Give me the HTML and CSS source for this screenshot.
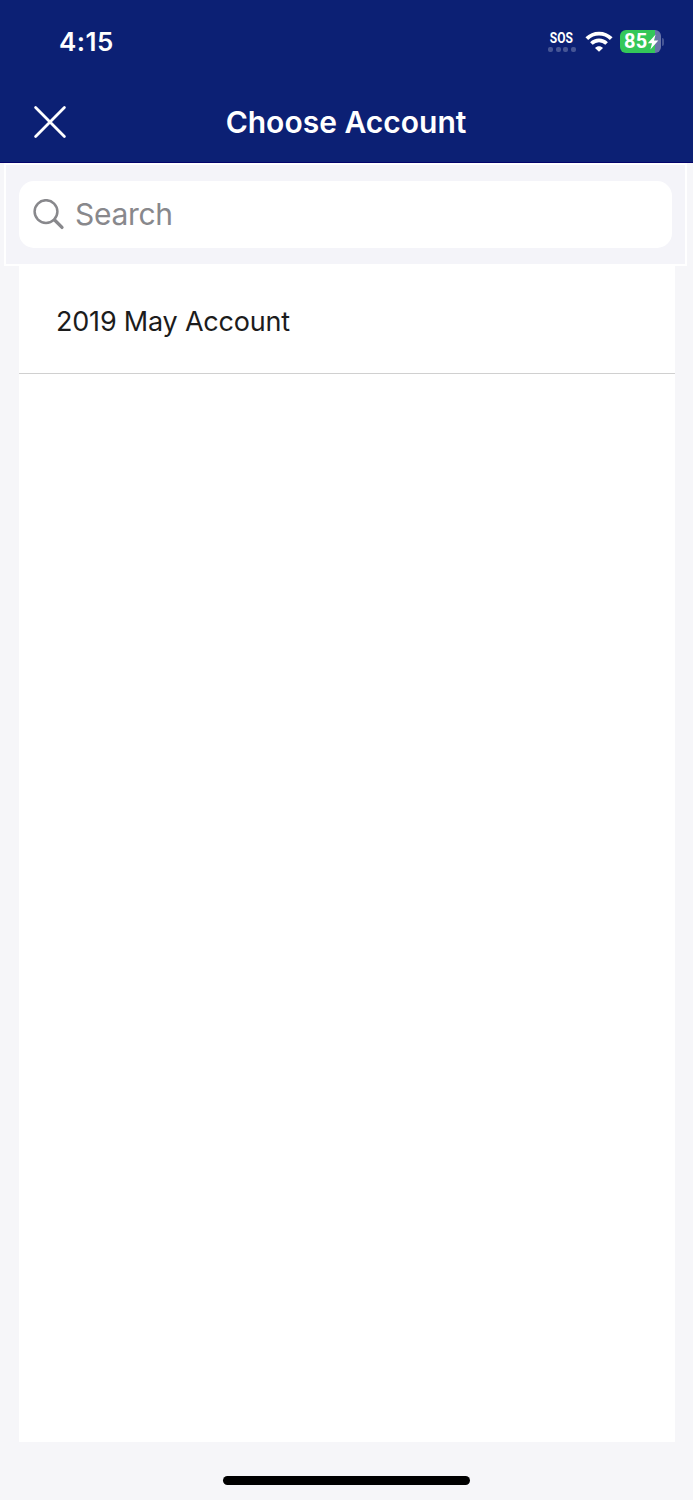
FILE: index.html
```
<!DOCTYPE html>
<html lang="en">
<head>
  <meta charset="UTF-8" />
  <meta name="viewport" content="width=device-width, initial-scale=1.0" />
  <title>Choose Account</title>
  <link rel="stylesheet" href="styles.css">
</head>
<body>
  <div class="screen">
    <header class="header">
      <div class="status-bar">
        <span class="time">4:15</span>
        <div class="status-icons">
          <div class="sos">
            <span class="sos-text">SOS</span>
            <div class="sos-dots"><i></i><i></i><i></i><i></i></div>
          </div>
          <svg class="wifi" width="28" height="22" viewBox="0 0 28 22" fill="none" stroke="#fff">
            <path d="M1.8 7.6C8.6 .9 19.4 .9 26.2 7.6" stroke-width="3.9" />
            <path d="M6.4 12.5C10.7 8.3 17.3 8.3 21.6 12.5" stroke-width="3.7" />
            <path d="M14 20.8L10 16.9C12.3 14.7 15.7 14.7 18 16.9Z" fill="#fff" stroke="none" />
          </svg>
          <div class="battery">
            <div class="battery-body">
              <span>85</span>
              <svg width="12" height="16" viewBox="0 0 12 16" fill="#fff">
                <path d="M8.6 .5L.8 9.2H5L3.4 15.5L11.3 6.6H7Z" />
              </svg>
            </div>
            <div class="battery-tip"></div>
          </div>
        </div>
      </div>
      <div class="nav">
        <button class="close-btn" aria-label="Close">
          <svg width="34" height="34" viewBox="0 0 34 34" fill="none" stroke="#fff" stroke-width="2.8" stroke-linecap="round">
            <path d="M2.6 2.6L31.4 31.4M31.4 2.6L2.6 31.4" />
          </svg>
        </button>
        <h1 class="title">Choose Account</h1>
      </div>
    </header>

    <div class="search-bar">
      <label class="search-box">
        <svg width="32" height="32" viewBox="0 0 32 32" fill="none" stroke="#88888c" stroke-linecap="round">
          <circle cx="13" cy="12.6" r="11.4" stroke-width="2.5" />
          <path d="M21.6 21L29 28.4" stroke-width="3.3" />
        </svg>
        <input type="text" placeholder="Search" />
      </label>
    </div>

    <main class="list">
      <div class="list-item">2019 May Account</div>
    </main>

    <div class="home-indicator"></div>
  </div>
</body>
</html>
```
FILE: styles.css
```
* {
  box-sizing: border-box;
}

body {
  margin: 0;
  font-family: 'Inter', 'Liberation Sans', sans-serif;
  background-color: #f6f6f9;
}

.screen {
  display: flex;
  flex-direction: column;
  height: 1500px;
}

/* header */
.header {
  height: 163px;
  background: #0c2074;
  border-bottom: 1px solid #04046c;
  color: #fff;
}

.status-bar {
  display: flex;
  justify-content: space-between;
  align-items: center;
  height: 83px;
  padding: 0 29px 0 59px;
}

.time {
  font-size: 26px;
  font-weight: 600;
  letter-spacing: 0.5px;
}

.status-icons {
  display: flex;
  align-items: center;
}

.sos {
  width: 28px;
  margin-right: 9px;
  text-align: center;
}

.sos-text {
  display: block;
  font-family: 'Roboto', sans-serif;
  font-size: 15px;
  font-weight: 700;
  line-height: 14px;
  transform: translateX(-1px) scaleX(0.8);
}

.sos-dots {
  display: flex;
  justify-content: space-between;
  margin-top: 2px;
}

.sos-dots i {
  width: 5px;
  height: 5px;
  border-radius: 2px;
  background: #465595;
}

.wifi {
  margin-right: 7px;
}

.battery {
  display: flex;
  align-items: center;
}

.battery-body {
  display: flex;
  align-items: center;
  width: 41px;
  height: 23px;
  padding-left: 4px;
  border-radius: 6px;
  background: linear-gradient(to right, #34c759 85%, #6874a8 85%);
}

.battery-body span {
  font-family: 'Roboto', sans-serif;
  font-size: 20px;
  font-weight: 700;
  line-height: 23px;
  letter-spacing: 0.2px;
}

.battery-tip {
  width: 2px;
  height: 8px;
  margin-left: 1px;
  border-radius: 0 2px 2px 0;
  background: #465595;
}

.nav {
  display: grid;
  grid-template-columns: 67px 1fr 67px;
  align-items: center;
  height: 78px;
}

.close-btn {
  display: flex;
  padding: 0 0 0 33px;
  border: none;
  background: none;
  cursor: pointer;
}

.title {
  margin: 0 1px 0 0;
  font-size: 30px;
  font-weight: 600;
  line-height: 36px;
  text-align: center;
}

/* search */
.search-bar {
  height: 103px;
  margin: 0 6px 0 4px;
  padding: 16px 13px;
  border: 2px solid #fff;
  background: #f4f4f9;
}

.search-box {
  display: flex;
  align-items: center;
  gap: 10px;
  height: 67px;
  padding-left: 14px;
  border-radius: 15px;
  background: #fff;
}

.search-box input {
  flex: 1;
  height: 36px;
  margin-bottom: 2px;
  padding: 0;
  border: none;
  outline: none;
  background: none;
  font-family: inherit;
  font-size: 30px;
  letter-spacing: -0.3px;
}

.search-box input::placeholder {
  color: #88888c;
}

/* accounts */
.list {
  height: 1176px;
  margin: 0 18px 0 19px;
  background: #fff;
}

.list-item {
  display: flex;
  align-items: center;
  height: 108px;
  padding: 4px 37px 0;
  border-bottom: 1px solid #d0d0d0;
  color: #1c1c1c;
  font-size: 27px;
  letter-spacing: -0.2px;
}

.home-indicator {
  width: 247px;
  height: 9px;
  margin: 34px auto 0;
  border-radius: 5px;
  background: #000;
}
```
